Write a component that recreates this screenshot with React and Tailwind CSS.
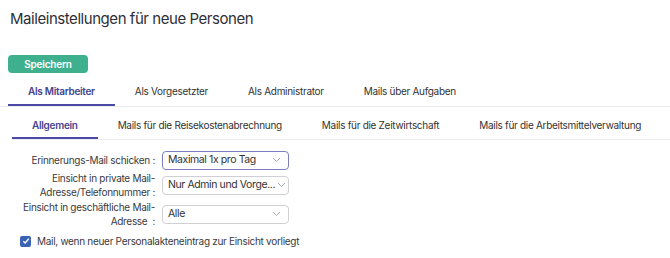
import React from "react";

const font = { fontFamily: "Inter, 'Noto Sans', sans-serif" };

function Chevron() {
  return (
    <svg width="9" height="6" viewBox="0 0 9 6" className="shrink-0">
      <path d="M1 1 L4.5 4.5 L8 1" fill="none" stroke="#a3a7b0" strokeWidth="1" />
    </svg>
  );
}

function Select({ value, focused }) {
  return (
    <div
      className={`flex h-[19px] w-[127px] items-center justify-between gap-[2px] rounded-[4px] border bg-white pl-[5px] pr-[7px] text-[10.5px] tracking-[-0.4px] text-[#333] ${
        focused ? "border-[#7c7cc0]" : "border-[#cfcfd4]"
      }`}
    >
      <span className="whitespace-nowrap leading-none">{value}</span>
      <Chevron />
    </div>
  );
}

export default function App() {
  const topTabs = ["Als Mitarbeiter", "Als Vorgesetzter", "Als Administrator", "Mails über Aufgaben"];
  const subTabs = [
    "Allgemein",
    "Mails für die Reisekostenabrechnung",
    "Mails für die Zeitwirtschaft",
    "Mails für die Arbeitsmittelverwaltung",
  ];
  return (
    <div className="h-[258px] w-[670px] overflow-hidden bg-white" style={font}>
      <h1 className="whitespace-nowrap pl-[10px] pt-[8px] text-[15px] leading-[22px] tracking-[-0.45px] text-[#2f2f37]">
        Maileinstellungen für neue Personen
      </h1>
      <div className="flex pl-[8px] pt-[25px]">
        <button className="h-[18px] w-[80px] rounded-[4px] bg-[#3fb08e] text-[10px] font-semibold leading-none tracking-[-0.2px] text-white">
          Speichern
        </button>
      </div>
      <div className="mt-[5px] flex border-b border-[#ececf0] pl-[8px]">
        {topTabs.map((t, i) => (
          <div
            key={t}
            className={`whitespace-nowrap px-[20px] pt-[7px] pb-[6px] text-[10px] leading-[13px] tracking-[-0.3px] ${
              i === 0
                ? "border-b-2 border-[#4b4aa6] font-semibold text-[#43438f]"
                : "border-b-2 border-transparent text-[#333]"
            }`}
          >
            {t}
          </div>
        ))}
      </div>
      <div className="ml-[12px] mt-[12px] flex border-b border-[#ececf0]">
        {subTabs.map((t, i) => (
          <div
            key={t}
            className={`whitespace-nowrap px-[20px] pb-[5px] text-[10px] leading-[13px] tracking-[-0.3px] ${
              i === 0
                ? "border-b-2 border-[#4b4aa6] font-semibold text-[#43438f]"
                : "border-b-2 border-transparent text-[#333]"
            }`}
          >
            {t}
          </div>
        ))}
      </div>
      <div className="mt-[10px] flex flex-col gap-[1px] text-[10px] tracking-[-0.3px] text-[#3a3a40]">
        <div className="flex h-[20px] items-center">
          <div className="w-[157px] whitespace-nowrap pr-[2px] text-right leading-[14px]">Erinnerungs-Mail schicken :</div>
          <div className="pl-[5px]">
            <Select value="Maximal 1x pro Tag" focused />
          </div>
        </div>
        <div className="flex h-[28px] items-center">
          <div className="w-[157px] whitespace-nowrap pr-[2px] text-right leading-[14px]">
            Einsicht in private Mail-
            <br />
            Adresse/Telefonnummer :
          </div>
          <div className="pl-[5px]">
            <Select value="Nur Admin und Vorge..." />
          </div>
        </div>
        <div className="flex h-[28px] items-center">
          <div className="w-[157px] whitespace-nowrap pr-[2px] text-right leading-[14px]">
            Einsicht in geschäftliche Mail-
            <br />
            Adresse&nbsp;&nbsp;:
          </div>
          <div className="pl-[5px]">
            <Select value="Alle" />
          </div>
        </div>
        <div className="mt-[5px] flex items-center gap-[6px] pl-[20px]">
          <div className="flex h-[11px] w-[11px] items-center justify-center rounded-[2px] bg-[#3a63b5]">
            <svg width="8" height="8" viewBox="0 0 8 8">
              <path d="M1.3 4.2 L3.2 6 L6.8 1.8" fill="none" stroke="white" strokeWidth="1.4" />
            </svg>
          </div>
          <span className="whitespace-nowrap leading-[14px]">Mail, wenn neuer Personalakteneintrag zur Einsicht vorliegt</span>
        </div>
      </div>
    </div>
  );
}
